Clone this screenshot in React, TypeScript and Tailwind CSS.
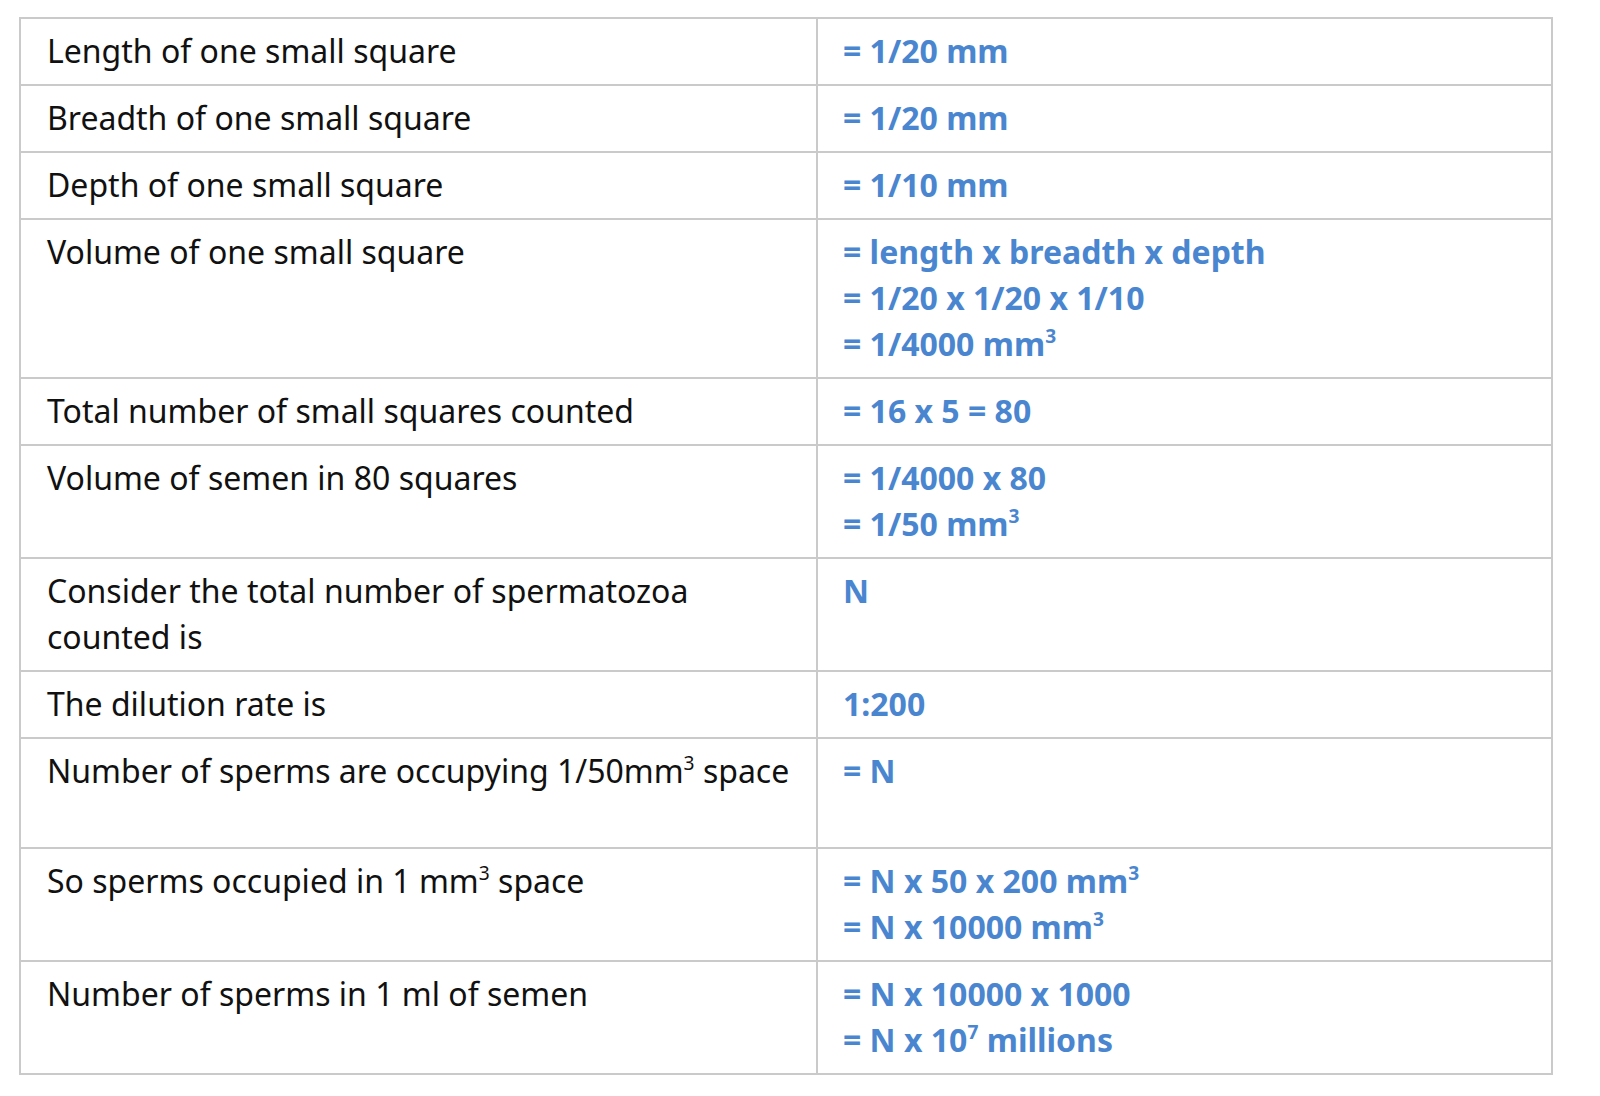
const rows: { left: React.ReactNode; right: React.ReactNode[]; h?: string }[] = [
  { left: "Length of one small square", right: ["= 1/20 mm"] },
  { left: "Breadth of one small square", right: ["= 1/20 mm"] },
  { left: "Depth of one small square", right: ["= 1/10 mm"] },
  {
    left: "Volume of one small square",
    right: ["= length x breadth x depth", "= 1/20 x 1/20 x 1/10", <>= 1/4000 mm<sup>3</sup></>],
  },
  { left: "Total number of small squares counted", right: ["= 16 x 5 = 80"] },
  { left: "Volume of semen in 80 squares", right: ["= 1/4000 x 80", <>= 1/50 mm<sup>3</sup></>] },
  { left: <>Consider the total number of spermatozoa<br />counted is</>, right: ["N"] },
  { left: "The dilution rate is", right: ["1:200"] },
  {
    left: <>Number of sperms are occupying 1/50mm<sup>3</sup> space</>,
    right: ["= N"],
    h: "h-[110px]",
  },
  {
    left: <>So sperms occupied in 1 mm<sup>3</sup> space</>,
    right: [<>= N x 50 x 200 mm<sup>3</sup></>, <>= N x 10000 mm<sup>3</sup></>],
  },
  {
    left: "Number of sperms in 1 ml of semen",
    right: ["= N x 10000 x 1000", <>= N x 10<sup>7</sup> millions</>],
  },
];

export default function App() {
  return (
    <div className="w-[1600px] h-[1096px] bg-white pt-[17px] pl-[19px] font-['Noto_Sans',sans-serif] text-[32px] leading-[46px] [&_sup]:text-[60%] [&_sup]:top-[-0.7em]">
      <table className="w-[1534px] table-fixed border-collapse">
        <colgroup>
          <col className="w-[797px]" />
          <col />
        </colgroup>
        <tbody>
          {rows.map((r, i) => (
            <tr key={i} className={r.h}>
              <td className="border-2 border-[#cacaca] align-top pl-[26px] pr-3 pt-[9px] pb-[10px] text-[#111]">
                {r.left}
              </td>
              <td className="border-2 border-[#cacaca] align-top pl-[25px] pt-[9px] pb-[10px] font-bold text-[#4a86d0]">
                {r.right.map((t, j) => (
                  <div key={j}>{t}</div>
                ))}
              </td>
            </tr>
          ))}
        </tbody>
      </table>
    </div>
  );
}
